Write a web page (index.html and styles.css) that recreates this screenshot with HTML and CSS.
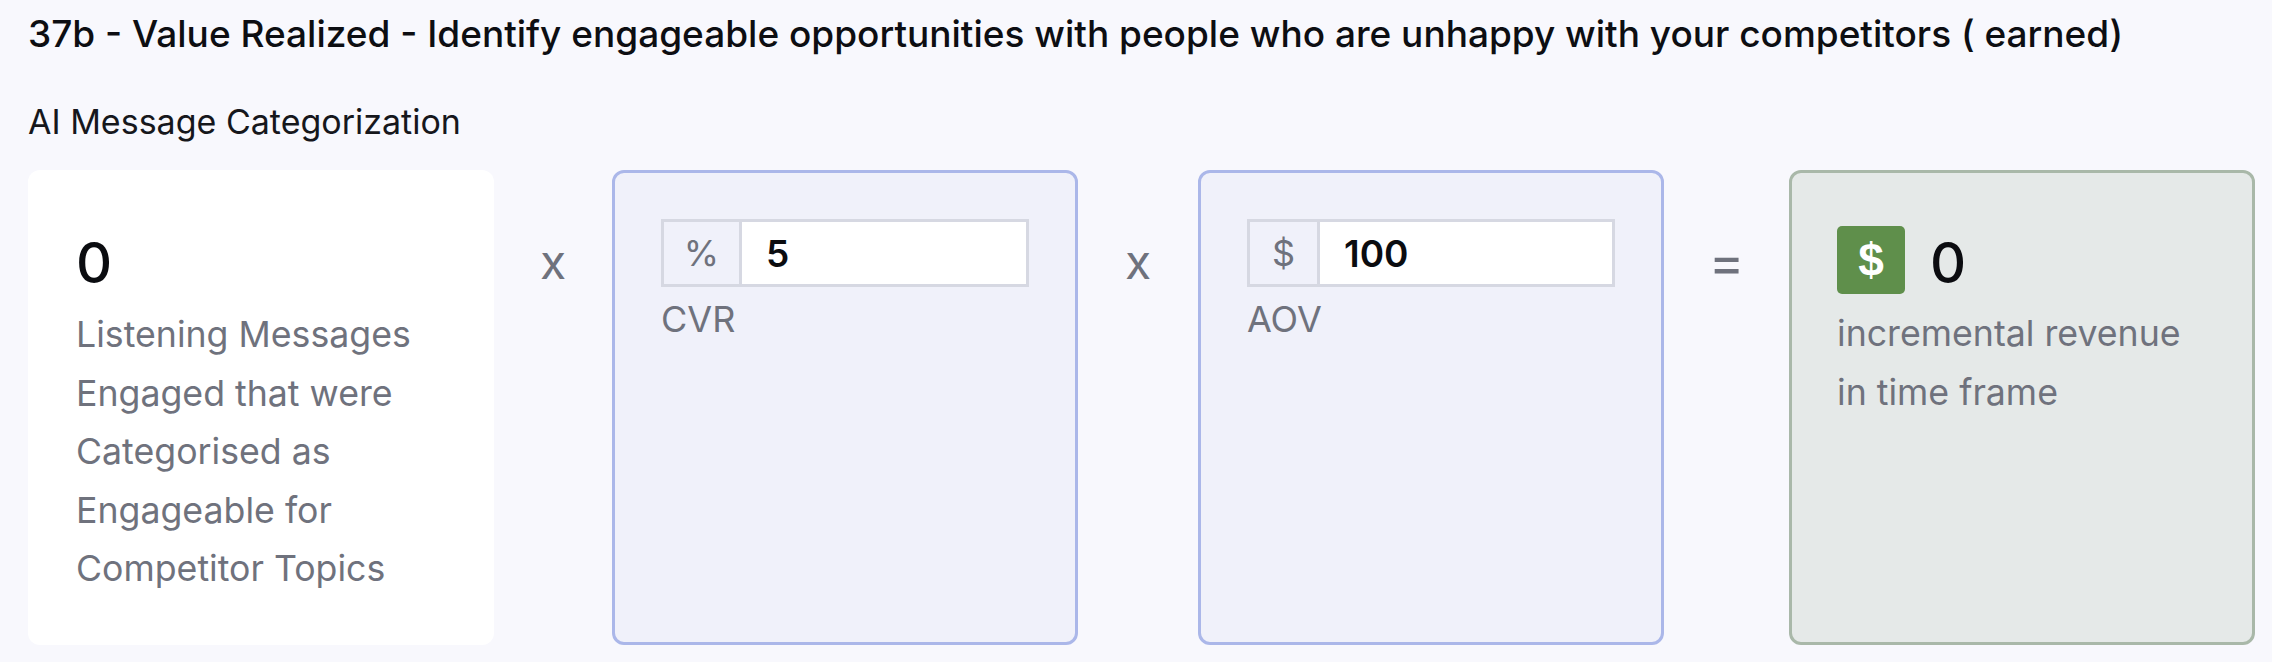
FILE: index.html
```html
<!DOCTYPE html>
<html lang="en">
<head>
<meta charset="utf-8">
<title>Value Realized</title>
<link rel="stylesheet" href="styles.css">
</head>
<body>
<main class="page">
  <h1 class="title">37b - Value Realized - Identify engageable opportunities with people who are unhappy with your competitors ( earned)</h1>
  <h2 class="subtitle">AI Message Categorization</h2>
  <section class="formula">
    <div class="card card-plain">
      <div class="value">0</div>
      <p class="desc">Listening Messages Engaged that were Categorised as Engageable for Competitor Topics</p>
    </div>
    <div class="op">x</div>
    <div class="card card-input">
      <div class="field">
        <span class="addon addon-pct">%</span>
        <span class="field-value">5</span>
      </div>
      <div class="label">CVR</div>
    </div>
    <div class="op">x</div>
    <div class="card card-input">
      <div class="field">
        <span class="addon addon-usd">$</span>
        <span class="field-value">100</span>
      </div>
      <div class="label">AOV</div>
    </div>
    <div class="op op-eq">=</div>
    <div class="card card-result">
      <div class="result-head">
        <span class="badge">$</span>
        <span class="value">0</span>
      </div>
      <p class="desc">incremental revenue in time frame</p>
    </div>
  </section>
</main>
</body>
</html>
```
FILE: styles.css
```css
* { box-sizing: border-box; }
html, body { margin: 0; padding: 0; }
body {
  width: 2272px;
  height: 662px;
  overflow: hidden;
  background: #f8f8fd;
  font-family: Inter, "Liberation Sans", sans-serif;
  color: #0d0e12;
}
.page { padding: 14px 16px 0 28px; }
.title {
  margin: 0;
  font-size: 37px;
  line-height: 40px;
  font-weight: 500;
  white-space: nowrap;
}
.subtitle {
  margin: 48px 0 0;
  font-size: 34px;
  line-height: 40px;
  font-weight: 400;
  color: #16171c;
}
.formula {
  display: grid;
  grid-template-columns: 466px 118px 466px 120px 466px 125px 466px;
  height: 475px;
  margin-top: 28px;
}
.card {
  border-radius: 12px;
}
.card-plain { background: #fff; padding: 59px 48px 0; }
.card-input {
  background: #f0f1fa;
  border: 3px solid #abb7e9;
  padding: 46px 46px 0;
}
.card-result {
  background: #e5e9e8;
  border: 3px solid #a9b8a9;
  padding: 53px 45px 0;
}
.value {
  font-size: 56px;
  line-height: 68px;
  font-weight: 500;
  color: #0b0c10;
}
.result-head .value { margin-top: 3px; }
.desc {
  margin: 8px 0 0;
  font-size: 35.7px;
  line-height: 58.6px;
  color: #6f727d;
}
.card-result .desc { margin-top: 7px; }
.op {
  display: flex;
  justify-content: center;
  padding-top: 58px;
  font-size: 48px;
  line-height: 68px;
  color: #6f727d;
}
.op-eq { font-size: 54px; }
.field {
  display: flex;
  height: 68px;
  border: 3px solid #d6d8e2;
  background: #fff;
}
.addon {
  display: flex;
  align-items: center;
  justify-content: center;
  background: #f0f1fa;
  border-right: 3px solid #d6d8e2;
  font-size: 36px;
  color: #6f727d;
}
.addon-pct { width: 78px; }
.addon-usd { width: 70px; }
.field-value {
  display: flex;
  align-items: center;
  padding-left: 24px;
  font-size: 37px;
  font-weight: 600;
  color: #0b0c10;
}
.label {
  margin-top: 10px;
  font-size: 36px;
  line-height: 44px;
  color: #6f727d;
}
.result-head {
  display: flex;
  align-items: flex-start;
  gap: 25px;
}
.badge {
  display: flex;
  align-items: center;
  justify-content: center;
  width: 68px;
  height: 68px;
  border-radius: 5px;
  background: #5f8f4b;
  color: #fff;
  font-family: "Liberation Sans", sans-serif;
  font-size: 46px;
  font-weight: 700;
}
```
